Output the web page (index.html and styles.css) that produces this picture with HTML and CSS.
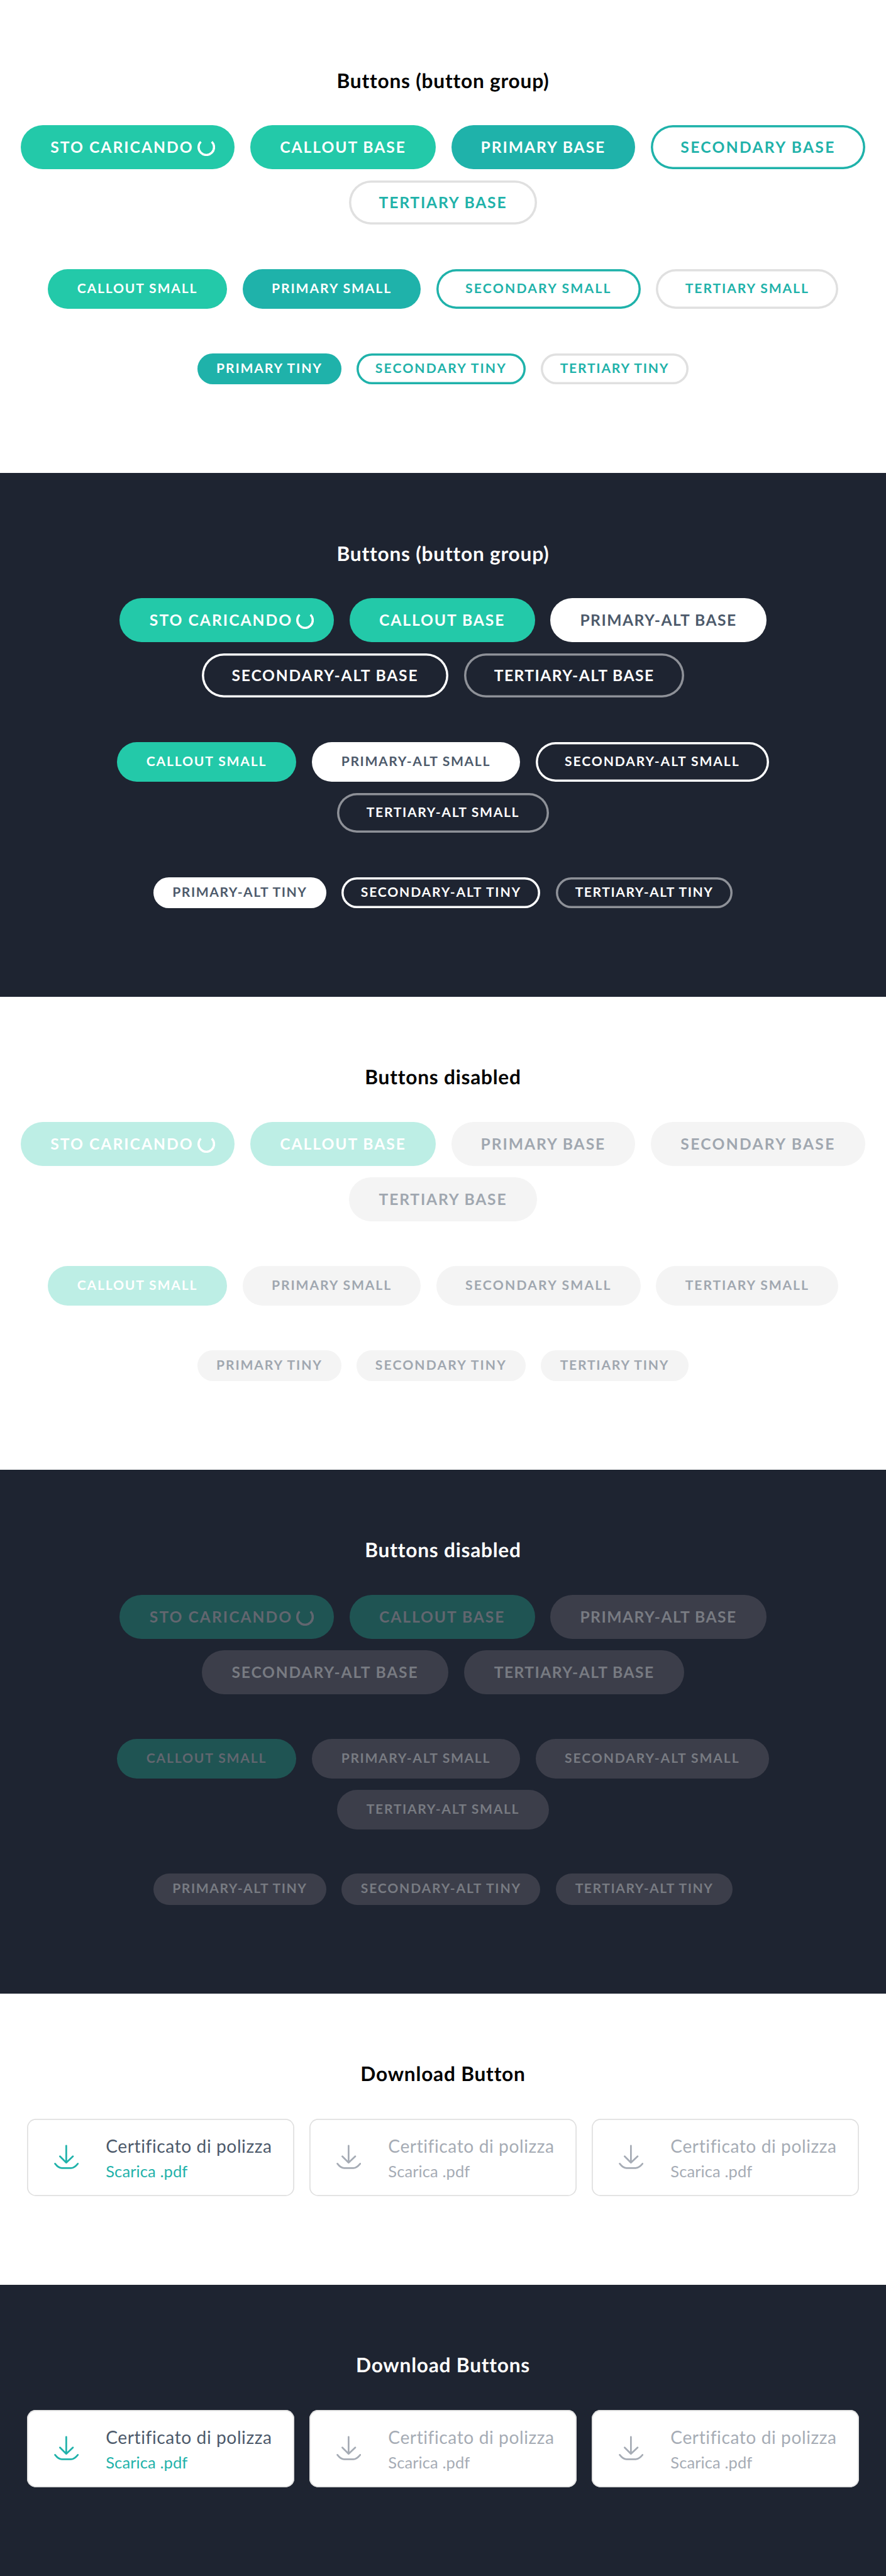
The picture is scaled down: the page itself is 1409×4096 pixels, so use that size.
FILE: index.html
```
<!DOCTYPE html>
<html lang="it">
<head>
<meta charset="utf-8">
<title>Buttons</title>
<link rel="stylesheet" href="styles.css">
</head>
<body>
<svg class="defs" aria-hidden="true">
  <symbol id="spinner" viewBox="0 0 32 32"><path d="M6.1 6.1A14 14 0 1 0 25.9 6.1" fill="none" stroke="currentColor" stroke-width="4"/></symbol>
  <symbol id="download" viewBox="0 0 45 45"><path d="M22 2V32.5M10.7 21.3L22 32.7L34 21.3M1.8 34.5C6 40 9 42.5 14 42.5H30.5C35.5 42.5 38.5 40 43 34.5" fill="none" stroke="currentColor" stroke-width="3.1" stroke-linecap="round" stroke-linejoin="round"/></symbol>
</svg>

<section class="section">
  <h2 class="title">Buttons (button group)</h2>
  <div class="group base">
    <button class="btn callout sto-caricando"><span>STO CARICANDO</span><svg class="spinner"><use href="#spinner"/></svg></button>
    <button class="btn callout callout-base">CALLOUT BASE</button>
    <button class="btn primary primary-base">PRIMARY BASE</button>
    <button class="btn secondary secondary-base">SECONDARY BASE</button>
    <button class="btn tertiary tertiary-base">TERTIARY BASE</button>
  </div>
  <div class="group small">
    <button class="btn callout callout-small">CALLOUT SMALL</button>
    <button class="btn primary primary-small">PRIMARY SMALL</button>
    <button class="btn secondary secondary-small">SECONDARY SMALL</button>
    <button class="btn tertiary tertiary-small">TERTIARY SMALL</button>
  </div>
  <div class="group tiny">
    <button class="btn primary primary-tiny">PRIMARY TINY</button>
    <button class="btn secondary secondary-tiny">SECONDARY TINY</button>
    <button class="btn tertiary tertiary-tiny">TERTIARY TINY</button>
  </div>
</section>

<section class="section dark">
  <h2 class="title">Buttons (button group)</h2>
  <div class="group base">
    <button class="btn callout sto-caricando"><span>STO CARICANDO</span><svg class="spinner"><use href="#spinner"/></svg></button>
    <button class="btn callout callout-base">CALLOUT BASE</button>
    <button class="btn primary primary-alt-base">PRIMARY-ALT BASE</button>
    <button class="btn secondary secondary-alt-base">SECONDARY-ALT BASE</button>
    <button class="btn tertiary tertiary-alt-base">TERTIARY-ALT BASE</button>
  </div>
  <div class="group small">
    <button class="btn callout callout-small">CALLOUT SMALL</button>
    <button class="btn primary primary-alt-small">PRIMARY-ALT SMALL</button>
    <button class="btn secondary secondary-alt-small">SECONDARY-ALT SMALL</button>
    <button class="btn tertiary tertiary-alt-small">TERTIARY-ALT SMALL</button>
  </div>
  <div class="group tiny">
    <button class="btn primary primary-alt-tiny">PRIMARY-ALT TINY</button>
    <button class="btn secondary secondary-alt-tiny">SECONDARY-ALT TINY</button>
    <button class="btn tertiary tertiary-alt-tiny">TERTIARY-ALT TINY</button>
  </div>
</section>

<section class="section">
  <h2 class="title">Buttons disabled</h2>
  <div class="group base">
    <button class="btn callout sto-caricando" disabled><span>STO CARICANDO</span><svg class="spinner"><use href="#spinner"/></svg></button>
    <button class="btn callout callout-base" disabled>CALLOUT BASE</button>
    <button class="btn primary primary-base" disabled>PRIMARY BASE</button>
    <button class="btn secondary secondary-base" disabled>SECONDARY BASE</button>
    <button class="btn tertiary tertiary-base" disabled>TERTIARY BASE</button>
  </div>
  <div class="group small">
    <button class="btn callout callout-small" disabled>CALLOUT SMALL</button>
    <button class="btn primary primary-small" disabled>PRIMARY SMALL</button>
    <button class="btn secondary secondary-small" disabled>SECONDARY SMALL</button>
    <button class="btn tertiary tertiary-small" disabled>TERTIARY SMALL</button>
  </div>
  <div class="group tiny">
    <button class="btn primary primary-tiny" disabled>PRIMARY TINY</button>
    <button class="btn secondary secondary-tiny" disabled>SECONDARY TINY</button>
    <button class="btn tertiary tertiary-tiny" disabled>TERTIARY TINY</button>
  </div>
</section>

<section class="section dark">
  <h2 class="title">Buttons disabled</h2>
  <div class="group base">
    <button class="btn callout sto-caricando" disabled><span>STO CARICANDO</span><svg class="spinner"><use href="#spinner"/></svg></button>
    <button class="btn callout callout-base" disabled>CALLOUT BASE</button>
    <button class="btn primary primary-alt-base" disabled>PRIMARY-ALT BASE</button>
    <button class="btn secondary secondary-alt-base" disabled>SECONDARY-ALT BASE</button>
    <button class="btn tertiary tertiary-alt-base" disabled>TERTIARY-ALT BASE</button>
  </div>
  <div class="group small">
    <button class="btn callout callout-small" disabled>CALLOUT SMALL</button>
    <button class="btn primary primary-alt-small" disabled>PRIMARY-ALT SMALL</button>
    <button class="btn secondary secondary-alt-small" disabled>SECONDARY-ALT SMALL</button>
    <button class="btn tertiary tertiary-alt-small" disabled>TERTIARY-ALT SMALL</button>
  </div>
  <div class="group tiny">
    <button class="btn primary primary-alt-tiny" disabled>PRIMARY-ALT TINY</button>
    <button class="btn secondary secondary-alt-tiny" disabled>SECONDARY-ALT TINY</button>
    <button class="btn tertiary tertiary-alt-tiny" disabled>TERTIARY-ALT TINY</button>
  </div>
</section>

<section class="section">
  <h2 class="title">Download Button</h2>
  <div class="group">
    <button class="download"><svg class="icon"><use href="#download"/></svg><span class="text"><span class="name">Certificato di polizza</span><span class="action">Scarica .pdf</span></span></button>
    <button class="download" disabled><svg class="icon"><use href="#download"/></svg><span class="text"><span class="name">Certificato di polizza</span><span class="action">Scarica .pdf</span></span></button>
    <button class="download" disabled><svg class="icon"><use href="#download"/></svg><span class="text"><span class="name">Certificato di polizza</span><span class="action">Scarica .pdf</span></span></button>
  </div>
</section>

<section class="section dark">
  <h2 class="title">Download Buttons</h2>
  <div class="group">
    <button class="download"><svg class="icon"><use href="#download"/></svg><span class="text"><span class="name">Certificato di polizza</span><span class="action">Scarica .pdf</span></span></button>
    <button class="download" disabled><svg class="icon"><use href="#download"/></svg><span class="text"><span class="name">Certificato di polizza</span><span class="action">Scarica .pdf</span></span></button>
    <button class="download" disabled><svg class="icon"><use href="#download"/></svg><span class="text"><span class="name">Certificato di polizza</span><span class="action">Scarica .pdf</span></span></button>
  </div>
</section>
</body>
</html>
```
FILE: styles.css
```
:root {
  --dark: #1e2431;
  --teal: #1fb2aa;
  --green: #23c9a9;
  --slate: #4d5a6b;
  --line: #e0e0e0;
}

* { box-sizing: border-box; }

html { font-size: 8.805px; }

body {
  margin: 0;
  background: #fff;
  font-family: Lato, "Liberation Sans", sans-serif;
  text-rendering: geometricPrecision;
}

.defs { display: none; }

.section {
  display: flex;
  flex-direction: column;
  align-items: center;
  gap: 8rem;
  padding: 12rem 3rem 16rem;
  color: #000;
}

.dark { background: var(--dark); color: #fff; }

.title {
  margin: 0 0 -3rem;
  height: 5.6rem;
  font-size: 3.6rem;
  font-weight: 700;
  line-height: 5.1rem;
  letter-spacing: .086rem;
}

.group {
  display: flex;
  flex-wrap: wrap;
  justify-content: center;
  gap: 2rem 2.8rem;
  width: 100%;
}

button {
  border: 0;
  margin: 0;
  padding: 0;
  background: none;
  font-family: inherit;
  color: inherit;
}

/* Button sizes */
.btn {
  flex: none;
  display: flex;
  justify-content: center;
  align-items: flex-start;
  border-radius: 4rem;
  font-weight: 700;
  white-space: nowrap;
}
.base .btn { height: 8rem; font-size: 2.8rem; line-height: 7.9rem; }
.small .btn { height: 7.2rem; font-size: 2.4rem; line-height: 7rem; }
.tiny .btn { height: 5.6rem; font-size: 2.4rem; line-height: 5.4rem; }

/* Button variants */
.callout { background: var(--green); color: #fff; }
.primary { background: var(--teal); color: #fff; }
.secondary { color: var(--teal); box-shadow: inset 0 0 0 .4rem var(--teal); }
.tertiary { color: var(--teal); box-shadow: inset 0 0 0 .4rem var(--line); }
.dark .primary { background: #fff; color: var(--slate); }
.dark .secondary { color: #fff; box-shadow: inset 0 0 0 .4rem #fff; }
.dark .tertiary { color: #fff; box-shadow: inset 0 0 0 .4rem #8e9198; }

.btn:disabled { background: #f4f4f4; color: #a0a7b0; box-shadow: none; }
.dark .btn:disabled { background: #3c3e4a; color: #787b82; box-shadow: none; }
.btn.callout:disabled { background: #bdeee5; color: #fff; }
.dark .btn.callout:disabled { background: #1f5453; color: #62666f; }

/* Label widths and tracking */
.sto-caricando { width: 38.7rem; letter-spacing: .229rem; padding: 0 3.6rem 0 5.4rem; }
.callout-base { width: 33.5rem; letter-spacing: .219rem; }
.primary-base { width: 33.2rem; letter-spacing: .219rem; }
.secondary-base { width: 38.8rem; letter-spacing: .261rem; }
.tertiary-base { width: 34rem; letter-spacing: .206rem; }
.primary-alt-base { width: 39rem; letter-spacing: .165rem; }
.secondary-alt-base { width: 44.6rem; letter-spacing: .204rem; }
.tertiary-alt-base { width: 39.8rem; letter-spacing: .161rem; }
.callout-small { width: 32.4rem; letter-spacing: .206rem; }
.primary-small { width: 32.2rem; letter-spacing: .214rem; }
.secondary-small { width: 36.9rem; letter-spacing: .25rem; }
.tertiary-small { width: 32.9rem; letter-spacing: .214rem; }
.primary-alt-small { width: 37.6rem; letter-spacing: .184rem; }
.secondary-alt-small { width: 42.2rem; letter-spacing: .213rem; }
.tertiary-alt-small { width: 38.2rem; letter-spacing: .187rem; }
.primary-tiny { width: 25.9rem; letter-spacing: .209rem; }
.secondary-tiny { width: 30.5rem; letter-spacing: .239rem; }
.tertiary-tiny { width: 26.6rem; letter-spacing: .199rem; }
.primary-alt-tiny { width: 31.2rem; letter-spacing: .173rem; }
.secondary-alt-tiny { width: 35.9rem; letter-spacing: .203rem; }
.tertiary-alt-tiny { width: 31.9rem; letter-spacing: .173rem; }

.spinner { width: 3.2rem; height: 3.2rem; margin: 2.4rem 0 0 auto; }

/* Download buttons */
.download {
  display: flex;
  align-items: flex-start;
  gap: 4.9rem;
  width: 48.2rem;
  height: 14rem;
  padding-left: 4.8rem;
  border-radius: 1.6rem;
  background: #fff;
  box-shadow: inset 0 0 0 .2rem var(--line);
  color: var(--slate);
  text-align: left;
  white-space: nowrap;
}
.icon { flex: none; width: 4.5rem; height: 4.5rem; margin-top: 4.7rem; color: var(--teal); }
.text { display: flex; flex-direction: column; margin-top: 2.8rem; }
.name { font-size: 3.2rem; line-height: 4.4rem; letter-spacing: .064rem; }
.action { font-size: 2.9rem; font-weight: 400; line-height: 4.7rem; letter-spacing: .01rem; color: var(--teal); }
.download:disabled,
.download:disabled .icon,
.download:disabled .action { color: #a6acb5; }
```
